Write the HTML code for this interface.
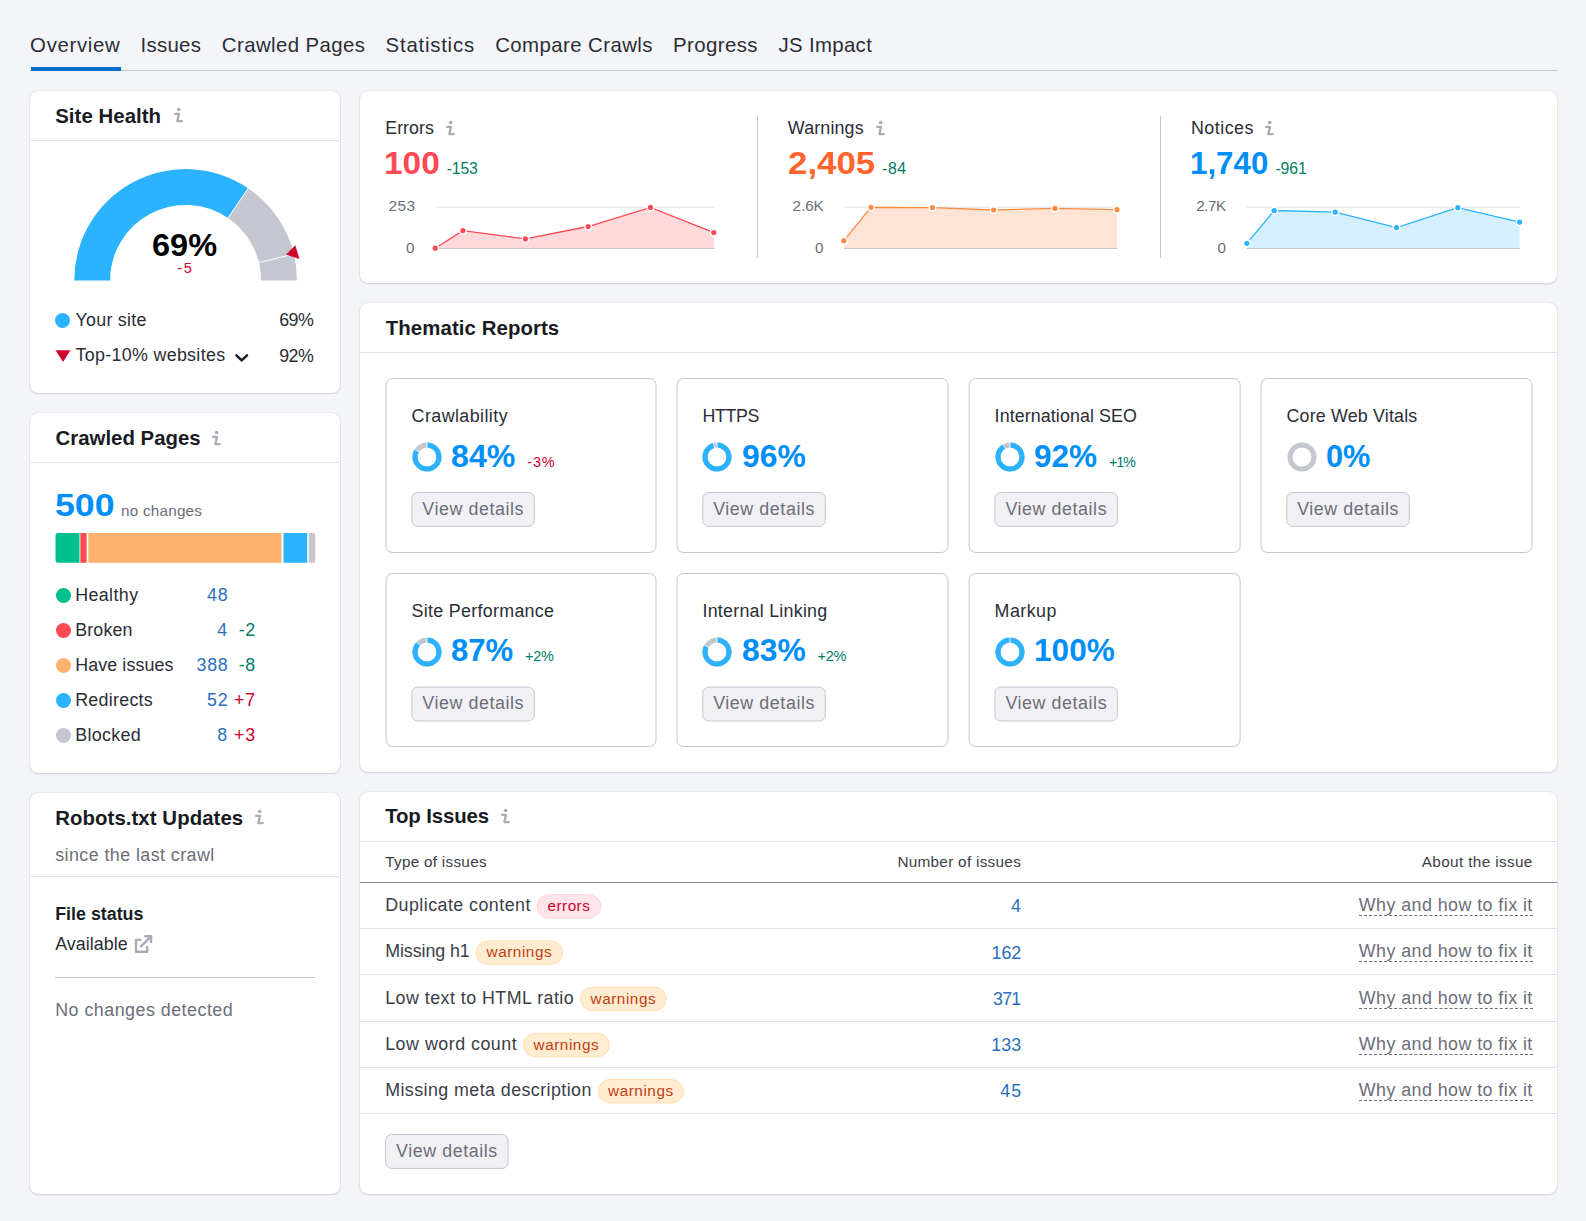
<!DOCTYPE html>
<html lang="en">
<head>
<meta charset="utf-8">
<title>Site Audit Overview</title>
<style>
*{box-sizing:border-box;margin:0;padding:0}
html,body{width:1586px;height:1221px;overflow:hidden}
body{background:#f4f5f9;font-family:"Liberation Sans",sans-serif;color:#191b23;position:relative}
.abs,.t,.card,.dot{position:absolute}
.t{white-space:pre}
.card{background:#fff;border-radius:8px;box-shadow:0 0 1.5px rgba(25,27,35,.22),0 1px 2px rgba(25,27,35,.12)}
.dot{width:15px;height:15px;border-radius:50%}
</style>
</head>
<body>
<div class="t" style="left:30.1px;top:35px;font-size:20.4px;line-height:20.4px;color:#2b2d36;letter-spacing:0.674px;">Overview</div>
<div class="t" style="left:140.4px;top:35px;font-size:20.4px;line-height:20.4px;color:#2b2d36;letter-spacing:0.333px;">Issues</div>
<div class="t" style="left:221.8px;top:35px;font-size:20.4px;line-height:20.4px;color:#2b2d36;letter-spacing:0.410px;">Crawled Pages</div>
<div class="t" style="left:385.6px;top:35px;font-size:20.4px;line-height:20.4px;color:#2b2d36;letter-spacing:0.767px;">Statistics</div>
<div class="t" style="left:495.2px;top:35px;font-size:20.4px;line-height:20.4px;color:#2b2d36;letter-spacing:0.420px;">Compare Crawls</div>
<div class="t" style="left:673.0px;top:35px;font-size:20.4px;line-height:20.4px;color:#2b2d36;letter-spacing:0.415px;">Progress</div>
<div class="t" style="left:778.5px;top:35px;font-size:20.4px;line-height:20.4px;color:#2b2d36;letter-spacing:0.330px;">JS Impact</div>
<div class="abs" style="left:30px;top:70px;width:1528px;height:1px;background:#c4c7cf"></div>
<div class="abs" style="left:30.5px;top:67px;width:90.2px;height:4px;background:#006dca"></div>
<div class="card" style="left:30.3px;top:91px;width:310.2px;height:302px"></div>
<div class="t" style="left:55.2px;top:106px;font-size:20.4px;line-height:20.4px;color:#191b23;letter-spacing:0.051px;font-weight:bold;">Site Health</div>
<svg class="abs" style="left:172.5px;top:106.8px" width="12" height="18" viewBox="0 0 12 18"><circle cx="5.7" cy="2.5" r="1.8" fill="#a9abb6"/><path d="M2.2 6.9 H5.9 L4.4 14.1 H8.8" fill="none" stroke="#a9abb6" stroke-width="2.3" stroke-linecap="round" stroke-linejoin="round"/></svg>
<div class="abs" style="left:30px;top:140px;width:310px;height:1px;background:#e0e1e9"></div>
<svg class="abs" style="left:0;top:0" width="400" height="400" viewBox="0 0 400 400"><path d="M74.25 280.40 A111.35 111.35 0 0 1 248.19 188.30 L228.01 218.00 A75.45 75.45 0 0 0 110.15 280.40 Z" fill="#2bb3ff"/><path d="M248.19 188.30 A111.35 111.35 0 0 1 296.95 280.40 L261.05 280.40 A75.45 75.45 0 0 0 228.01 218.00 Z" fill="#c4c7cf"/><line x1="227.45" y1="218.82" x2="248.75" y2="187.48" stroke="#fff" stroke-width="1"/><line x1="257.93" y1="262.77" x2="294.75" y2="253.79" stroke="#fff" stroke-width="1"/><path d="M286.0 254.4 L295.3 245.3 L299.4 258.9 Z" fill="#d1002f"/></svg>
<div class="t" style="left:152.2px;top:230px;font-size:31.0px;line-height:31.0px;color:#000;transform:scaleX(1.0492);transform-origin:0 0;font-weight:bold;">69%</div>
<div class="t" style="left:177.2px;top:261px;font-size:14.59px;line-height:14.59px;color:#d1002f;letter-spacing:1.731px;">-5</div>
<div class="dot" style="left:55.1px;top:312.8px;width:15.4px;height:15.4px;background:#2bb3ff"></div>
<div class="t" style="left:75.5px;top:312px;font-size:17.85px;line-height:17.85px;color:#2b2d36;letter-spacing:0.265px;">Your site</div>
<div class="t" style="left:279.2px;top:312px;font-size:17.85px;line-height:17.85px;color:#2b2d36;letter-spacing:-0.509px;">69%</div>
<svg class="abs" style="left:55px;top:350px" width="16" height="13" viewBox="0 0 16 13"><path d="M0.5 0.3 H15.5 L8 12 Z" fill="#d1002f"/></svg>
<div class="t" style="left:75.5px;top:347px;font-size:17.85px;line-height:17.85px;color:#2b2d36;letter-spacing:0.319px;">Top-10% websites</div>
<svg class="abs" style="left:234px;top:351.7px" width="16" height="12" viewBox="0 0 16 12"><path d="M2.4 3.4 L7.7 8.4 L13 3.4" fill="none" stroke="#191b23" stroke-width="2.5" stroke-linecap="round" stroke-linejoin="round"/></svg>
<div class="t" style="left:279.2px;top:348px;font-size:17.85px;line-height:17.85px;color:#2b2d36;letter-spacing:-0.509px;">92%</div>
<div class="card" style="left:30.3px;top:413px;width:310.2px;height:360px"></div>
<div class="t" style="left:55.5px;top:428px;font-size:20.4px;line-height:20.4px;color:#191b23;letter-spacing:0.010px;font-weight:bold;">Crawled Pages</div>
<svg class="abs" style="left:210.7px;top:430.0px" width="12" height="18" viewBox="0 0 12 18"><circle cx="5.7" cy="2.5" r="1.8" fill="#a9abb6"/><path d="M2.2 6.9 H5.9 L4.4 14.1 H8.8" fill="none" stroke="#a9abb6" stroke-width="2.3" stroke-linecap="round" stroke-linejoin="round"/></svg>
<div class="abs" style="left:30px;top:462px;width:310px;height:1px;background:#e0e1e9"></div>
<div class="t" style="left:55.1px;top:490px;font-size:31.0px;line-height:31.0px;color:#008ff8;transform:scaleX(1.1520);transform-origin:0 0;font-weight:bold;">500</div>
<div class="t" style="left:121.0px;top:503px;font-size:15.3px;line-height:15.3px;color:#6c6e79;letter-spacing:0.210px;">no changes</div>
<svg class="abs" style="left:50px;top:530px" width="270" height="36" viewBox="50 530 270 36"><defs><clipPath id="barclip"><rect x="55.3" y="533.1" width="260.3" height="29.6" rx="3.2"/></clipPath></defs><g clip-path="url(#barclip)"><rect x="55.3" y="533" width="24.20" height="30" fill="#00bf8f"/><rect x="80.35" y="533" width="6.25" height="30" fill="#ff4953"/><rect x="88.3" y="533" width="193.10" height="30" fill="#ffb26e"/><rect x="283.5" y="533" width="23.70" height="30" fill="#2bb3ff"/><rect x="308.7" y="533" width="6.90" height="30" fill="#c4c7cf"/></g></svg>
<div class="dot" style="left:55.5px;top:587.9px;width:15.4px;height:15.4px;background:#00bf8f"></div>
<div class="t" style="left:75.2px;top:587px;font-size:17.85px;line-height:17.85px;color:#2b2d36;letter-spacing:0.397px;">Healthy</div>
<div class="t" style="left:206.9px;top:587px;font-size:17.85px;line-height:17.85px;color:#2a6fc0;letter-spacing:0.894px;">48</div>
<div class="dot" style="left:55.5px;top:622.9px;width:15.4px;height:15.4px;background:#ff4953"></div>
<div class="t" style="left:75.2px;top:622px;font-size:17.85px;line-height:17.85px;color:#2b2d36;letter-spacing:0.151px;">Broken</div>
<div class="t" style="left:217.3px;top:622px;font-size:17.85px;line-height:17.85px;color:#2a6fc0;">4</div>
<div class="t" style="left:238.7px;top:622px;font-size:17.85px;line-height:17.85px;color:#007c65;letter-spacing:0.714px;">-2</div>
<div class="dot" style="left:55.5px;top:657.8px;width:15.4px;height:15.4px;background:#ffb26e"></div>
<div class="t" style="left:75.2px;top:657px;font-size:17.85px;line-height:17.85px;color:#2b2d36;letter-spacing:0.110px;">Have issues</div>
<div class="t" style="left:196.6px;top:657px;font-size:17.85px;line-height:17.85px;color:#2a6fc0;letter-spacing:0.670px;">388</div>
<div class="t" style="left:238.7px;top:657px;font-size:17.85px;line-height:17.85px;color:#007c65;letter-spacing:0.714px;">-8</div>
<div class="dot" style="left:55.5px;top:692.8px;width:15.4px;height:15.4px;background:#2bb3ff"></div>
<div class="t" style="left:75.2px;top:692px;font-size:17.85px;line-height:17.85px;color:#2b2d36;letter-spacing:0.278px;">Redirects</div>
<div class="t" style="left:206.9px;top:692px;font-size:17.85px;line-height:17.85px;color:#2a6fc0;letter-spacing:0.894px;">52</div>
<div class="t" style="left:234.0px;top:692px;font-size:17.85px;line-height:17.85px;color:#d1002f;letter-spacing:0.916px;">+7</div>
<div class="dot" style="left:55.5px;top:727.7px;width:15.4px;height:15.4px;background:#c4c7cf"></div>
<div class="t" style="left:75.2px;top:727px;font-size:17.85px;line-height:17.85px;color:#2b2d36;letter-spacing:0.336px;">Blocked</div>
<div class="t" style="left:217.3px;top:727px;font-size:17.85px;line-height:17.85px;color:#2a6fc0;">8</div>
<div class="t" style="left:234.0px;top:727px;font-size:17.85px;line-height:17.85px;color:#d1002f;letter-spacing:0.916px;">+3</div>
<div class="card" style="left:30.3px;top:793px;width:310.2px;height:401px"></div>
<div class="t" style="left:55.2px;top:808px;font-size:20.4px;line-height:20.4px;color:#191b23;letter-spacing:0.063px;font-weight:bold;">Robots.txt Updates</div>
<svg class="abs" style="left:254.4px;top:809.2px" width="12" height="18" viewBox="0 0 12 18"><circle cx="5.7" cy="2.5" r="1.8" fill="#a9abb6"/><path d="M2.2 6.9 H5.9 L4.4 14.1 H8.8" fill="none" stroke="#a9abb6" stroke-width="2.3" stroke-linecap="round" stroke-linejoin="round"/></svg>
<div class="t" style="left:55.2px;top:847px;font-size:17.85px;line-height:17.85px;color:#6c6e79;letter-spacing:0.434px;">since the last crawl</div>
<div class="abs" style="left:30px;top:876px;width:310px;height:1px;background:#e0e1e9"></div>
<div class="t" style="left:55.2px;top:906px;font-size:17.85px;line-height:17.85px;color:#191b23;font-weight:bold;">File status</div>
<div class="t" style="left:55.2px;top:936px;font-size:17.85px;line-height:17.85px;color:#2b2d36;letter-spacing:0.063px;">Available</div>
<svg class="abs" style="left:134px;top:934px" width="20" height="20" viewBox="0 0 20 20"><g fill="none" stroke="#a9abb6" stroke-width="2.4" stroke-linecap="round" stroke-linejoin="round"><path d="M6.3 5.9 H2 V17.7 H13.2 V13"/><path d="M11.3 2.3 H17.1 V8.1"/><path d="M16.6 2.8 L7 12.4"/></g></svg>
<div class="abs" style="left:55.3px;top:977px;width:260.2px;height:1px;background:#c4c7cf"></div>
<div class="t" style="left:55.2px;top:1002px;font-size:17.85px;line-height:17.85px;color:#6c6e79;letter-spacing:0.491px;">No changes detected</div>
<div class="card" style="left:360.2px;top:91px;width:1197.2px;height:192px"></div>
<div class="abs" style="left:757px;top:116px;width:1px;height:142px;background:#c4c7cf"></div>
<div class="abs" style="left:1160px;top:116px;width:1px;height:142px;background:#c4c7cf"></div>
<div class="t" style="left:385.2px;top:120px;font-size:17.85px;line-height:17.85px;color:#2b2d36;letter-spacing:0.044px;">Errors</div>
<svg class="abs" style="left:444.7px;top:119.7px" width="12" height="18" viewBox="0 0 12 18"><circle cx="5.7" cy="2.5" r="1.8" fill="#a9abb6"/><path d="M2.2 6.9 H5.9 L4.4 14.1 H8.8" fill="none" stroke="#a9abb6" stroke-width="2.3" stroke-linecap="round" stroke-linejoin="round"/></svg>
<div class="t" style="left:384.2px;top:148px;font-size:31.0px;line-height:31.0px;color:#ff4953;transform:scaleX(1.0786);transform-origin:0 0;font-weight:bold;">100</div>
<div class="t" style="left:446.8px;top:161px;font-size:15.81px;line-height:15.81px;color:#007c65;letter-spacing:-0.208px;">-153</div>
<div class="t" style="left:388.5px;top:198px;font-size:15.3px;line-height:15.3px;color:#6c6e79;letter-spacing:0.484px;">253</div>
<div class="t" style="left:406.1px;top:240px;font-size:15.3px;line-height:15.3px;color:#6c6e79;">0</div>
<svg class="abs" style="left:0;top:0" width="1586" height="300" viewBox="0 0 1586 300"><line x1="435.7" y1="207.2" x2="714.3" y2="207.2" stroke="#e0e1e9" stroke-width="1"/><polygon points="435.2,248.5 435.2,248.2 462.9,230.6 525.4,238.9 588.2,226.5 650.5,207.4 713.8,232.6 713.8,248.5" fill="#ffd9dc"/><line x1="435.7" y1="248.5" x2="714.3" y2="248.5" stroke="#c4c7cf" stroke-width="1"/><polyline points="435.2,248.2 462.9,230.6 525.4,238.9 588.2,226.5 650.5,207.4 713.8,232.6" fill="none" stroke="#ff4953" stroke-width="1.3"/><circle cx="435.2" cy="248.2" r="3.3" fill="#ff4953" stroke="#fff" stroke-width="1.4"/><circle cx="462.9" cy="230.6" r="3.3" fill="#ff4953" stroke="#fff" stroke-width="1.4"/><circle cx="525.4" cy="238.9" r="3.3" fill="#ff4953" stroke="#fff" stroke-width="1.4"/><circle cx="588.2" cy="226.5" r="3.3" fill="#ff4953" stroke="#fff" stroke-width="1.4"/><circle cx="650.5" cy="207.4" r="3.3" fill="#ff4953" stroke="#fff" stroke-width="1.4"/><circle cx="713.8" cy="232.6" r="3.3" fill="#ff4953" stroke="#fff" stroke-width="1.4"/></svg>
<div class="t" style="left:787.8px;top:120px;font-size:17.85px;line-height:17.85px;color:#2b2d36;letter-spacing:0.157px;">Warnings</div>
<svg class="abs" style="left:875.2px;top:119.7px" width="12" height="18" viewBox="0 0 12 18"><circle cx="5.7" cy="2.5" r="1.8" fill="#a9abb6"/><path d="M2.2 6.9 H5.9 L4.4 14.1 H8.8" fill="none" stroke="#a9abb6" stroke-width="2.3" stroke-linecap="round" stroke-linejoin="round"/></svg>
<div class="t" style="left:788.1px;top:148px;font-size:31.0px;line-height:31.0px;color:#ff642d;transform:scaleX(1.1240);transform-origin:0 0;font-weight:bold;">2,405</div>
<div class="t" style="left:882.1px;top:161px;font-size:15.81px;line-height:15.81px;color:#007c65;letter-spacing:0.578px;">-84</div>
<div class="t" style="left:792.5px;top:198px;font-size:15.3px;line-height:15.3px;color:#6c6e79;letter-spacing:-0.056px;">2.6K</div>
<div class="t" style="left:814.9px;top:240px;font-size:15.3px;line-height:15.3px;color:#6c6e79;">0</div>
<svg class="abs" style="left:0;top:0" width="1586" height="300" viewBox="0 0 1586 300"><line x1="843.9" y1="207.2" x2="1117.5" y2="207.2" stroke="#e0e1e9" stroke-width="1"/><polygon points="843.9,248.5 843.9,240.7 870.9,207.3 932.4,207.7 993.7,210.0 1055.0,208.4 1117.0,209.7 1117.0,248.5" fill="#ffe4d6"/><line x1="843.9" y1="248.5" x2="1117.5" y2="248.5" stroke="#c4c7cf" stroke-width="1"/><polyline points="843.9,240.7 870.9,207.3 932.4,207.7 993.7,210.0 1055.0,208.4 1117.0,209.7" fill="none" stroke="#ff8c43" stroke-width="1.3"/><circle cx="843.9" cy="240.7" r="3.3" fill="#ff8c43" stroke="#fff" stroke-width="1.4"/><circle cx="870.9" cy="207.3" r="3.3" fill="#ff8c43" stroke="#fff" stroke-width="1.4"/><circle cx="932.4" cy="207.7" r="3.3" fill="#ff8c43" stroke="#fff" stroke-width="1.4"/><circle cx="993.7" cy="210.0" r="3.3" fill="#ff8c43" stroke="#fff" stroke-width="1.4"/><circle cx="1055.0" cy="208.4" r="3.3" fill="#ff8c43" stroke="#fff" stroke-width="1.4"/><circle cx="1117.0" cy="209.7" r="3.3" fill="#ff8c43" stroke="#fff" stroke-width="1.4"/></svg>
<div class="t" style="left:1191.0px;top:120px;font-size:17.85px;line-height:17.85px;color:#2b2d36;letter-spacing:0.483px;">Notices</div>
<svg class="abs" style="left:1264.2px;top:119.7px" width="12" height="18" viewBox="0 0 12 18"><circle cx="5.7" cy="2.5" r="1.8" fill="#a9abb6"/><path d="M2.2 6.9 H5.9 L4.4 14.1 H8.8" fill="none" stroke="#a9abb6" stroke-width="2.3" stroke-linecap="round" stroke-linejoin="round"/></svg>
<div class="t" style="left:1190.0px;top:148px;font-size:31.0px;line-height:31.0px;color:#008ff8;transform:scaleX(1.0093);transform-origin:0 0;font-weight:bold;">1,740</div>
<div class="t" style="left:1275.5px;top:161px;font-size:15.81px;line-height:15.81px;color:#007c65;letter-spacing:-0.142px;">-961</div>
<div class="t" style="left:1196.3px;top:198px;font-size:15.3px;line-height:15.3px;color:#6c6e79;letter-spacing:-0.490px;">2.7K</div>
<div class="t" style="left:1217.4px;top:240px;font-size:15.3px;line-height:15.3px;color:#6c6e79;">0</div>
<svg class="abs" style="left:0;top:0" width="1586" height="300" viewBox="0 0 1586 300"><line x1="1246.9" y1="207.2" x2="1520.1" y2="207.2" stroke="#e0e1e9" stroke-width="1"/><polygon points="1246.9,248.5 1246.9,243.3 1274.2,210.5 1335.2,212.2 1396.5,227.6 1457.8,207.7 1519.6,222.1 1519.6,248.5" fill="#d4effd"/><line x1="1246.9" y1="248.5" x2="1520.1" y2="248.5" stroke="#c4c7cf" stroke-width="1"/><polyline points="1246.9,243.3 1274.2,210.5 1335.2,212.2 1396.5,227.6 1457.8,207.7 1519.6,222.1" fill="none" stroke="#2bb3ff" stroke-width="1.3"/><circle cx="1246.9" cy="243.3" r="3.3" fill="#2bb3ff" stroke="#fff" stroke-width="1.4"/><circle cx="1274.2" cy="210.5" r="3.3" fill="#2bb3ff" stroke="#fff" stroke-width="1.4"/><circle cx="1335.2" cy="212.2" r="3.3" fill="#2bb3ff" stroke="#fff" stroke-width="1.4"/><circle cx="1396.5" cy="227.6" r="3.3" fill="#2bb3ff" stroke="#fff" stroke-width="1.4"/><circle cx="1457.8" cy="207.7" r="3.3" fill="#2bb3ff" stroke="#fff" stroke-width="1.4"/><circle cx="1519.6" cy="222.1" r="3.3" fill="#2bb3ff" stroke="#fff" stroke-width="1.4"/></svg>
<div class="card" style="left:360.2px;top:302.6px;width:1197.2px;height:469.4px"></div>
<div class="t" style="left:385.8px;top:318px;font-size:20.4px;line-height:20.4px;color:#191b23;letter-spacing:0.078px;font-weight:bold;">Thematic Reports</div>
<div class="abs" style="left:360px;top:352px;width:1197px;height:1px;background:#e0e1e9"></div>
<svg class="abs" style="left:384px;top:376px" width="276" height="180"><rect x="2.05" y="2.50" width="269.95" height="174.00" rx="6.5" fill="#fff" stroke="#c4c7cf" stroke-width="1"/></svg>
<div class="t" style="left:411.6px;top:408px;font-size:17.85px;line-height:17.85px;color:#2b2d36;letter-spacing:0.433px;">Crawlability</div>
<svg class="abs" style="left:410.5px;top:441.0px" width="32" height="32" viewBox="0 0 32 32"><circle cx="16" cy="16" r="12.0" fill="none" stroke="#c4c7cf" stroke-width="5.1"/><circle cx="16" cy="16" r="12.0" fill="none" stroke="#2bb3ff" stroke-width="5.1" stroke-dasharray="63.33 75.40" transform="rotate(-90 16 16)"/><line x1="16.00" y1="7.00" x2="16.00" y2="1.00" stroke="#fff" stroke-width="0.9"/><line x1="8.40" y1="11.18" x2="3.34" y2="7.96" stroke="#fff" stroke-width="0.9"/></svg>
<div class="t" style="left:451.1px;top:441px;font-size:31.0px;line-height:31.0px;color:#008ff8;transform:scaleX(1.0379);transform-origin:0 0;font-weight:bold;">84%</div>
<div class="t" style="left:527.2px;top:455px;font-size:14.48px;line-height:14.48px;color:#d1002f;letter-spacing:0.883px;">-3%</div>
<svg class="abs" style="left:409px;top:490px" width="129" height="40"><rect x="2.85" y="2.50" width="122.50" height="33.90" rx="6" fill="#f1f1f5" stroke="#c4c7cf" stroke-width="1"/></svg>
<div class="t" style="left:422.3px;top:501px;font-size:17.85px;line-height:17.85px;color:#6c6e79;letter-spacing:0.572px;">View details</div>
<svg class="abs" style="left:675px;top:376px" width="277" height="180"><rect x="2.00" y="2.50" width="271.00" height="174.00" rx="6.5" fill="#fff" stroke="#c4c7cf" stroke-width="1"/></svg>
<div class="t" style="left:702.5px;top:408px;font-size:17.85px;line-height:17.85px;color:#2b2d36;letter-spacing:-0.375px;">HTTPS</div>
<svg class="abs" style="left:701.4px;top:441.0px" width="32" height="32" viewBox="0 0 32 32"><circle cx="16" cy="16" r="12.0" fill="none" stroke="#c4c7cf" stroke-width="5.1"/><circle cx="16" cy="16" r="12.0" fill="none" stroke="#2bb3ff" stroke-width="5.1" stroke-dasharray="72.38 75.40" transform="rotate(-90 16 16)"/><line x1="16.00" y1="7.00" x2="16.00" y2="1.00" stroke="#fff" stroke-width="0.9"/><line x1="13.76" y1="7.28" x2="12.27" y2="1.47" stroke="#fff" stroke-width="0.9"/></svg>
<div class="t" style="left:742.0px;top:441px;font-size:31.0px;line-height:31.0px;color:#008ff8;transform:scaleX(1.0266);transform-origin:0 0;font-weight:bold;">96%</div>
<svg class="abs" style="left:700px;top:490px" width="129" height="40"><rect x="2.80" y="2.50" width="122.50" height="33.90" rx="6" fill="#f1f1f5" stroke="#c4c7cf" stroke-width="1"/></svg>
<div class="t" style="left:713.2px;top:501px;font-size:17.85px;line-height:17.85px;color:#6c6e79;letter-spacing:0.572px;">View details</div>
<svg class="abs" style="left:967px;top:376px" width="277" height="180"><rect x="2.10" y="2.50" width="271.00" height="174.00" rx="6.5" fill="#fff" stroke="#c4c7cf" stroke-width="1"/></svg>
<div class="t" style="left:994.6px;top:408px;font-size:17.85px;line-height:17.85px;color:#2b2d36;letter-spacing:0.096px;">International SEO</div>
<svg class="abs" style="left:993.5px;top:441.0px" width="32" height="32" viewBox="0 0 32 32"><circle cx="16" cy="16" r="12.0" fill="none" stroke="#c4c7cf" stroke-width="5.1"/><circle cx="16" cy="16" r="12.0" fill="none" stroke="#2bb3ff" stroke-width="5.1" stroke-dasharray="69.37 75.40" transform="rotate(-90 16 16)"/><line x1="16.00" y1="7.00" x2="16.00" y2="1.00" stroke="#fff" stroke-width="0.9"/><line x1="11.66" y1="8.11" x2="8.77" y2="2.86" stroke="#fff" stroke-width="0.9"/></svg>
<div class="t" style="left:1034.2px;top:441px;font-size:31.0px;line-height:31.0px;color:#008ff8;transform:scaleX(1.0170);transform-origin:0 0;font-weight:bold;">92%</div>
<div class="t" style="left:1109.0px;top:455px;font-size:14.48px;line-height:14.48px;color:#007c65;letter-spacing:-1.238px;">+1%</div>
<svg class="abs" style="left:992px;top:490px" width="129" height="40"><rect x="2.90" y="2.50" width="122.50" height="33.90" rx="6" fill="#f1f1f5" stroke="#c4c7cf" stroke-width="1"/></svg>
<div class="t" style="left:1005.4px;top:501px;font-size:17.85px;line-height:17.85px;color:#6c6e79;letter-spacing:0.572px;">View details</div>
<svg class="abs" style="left:1259px;top:376px" width="277" height="180"><rect x="2.00" y="2.50" width="271.00" height="174.00" rx="6.5" fill="#fff" stroke="#c4c7cf" stroke-width="1"/></svg>
<div class="t" style="left:1286.5px;top:408px;font-size:17.85px;line-height:17.85px;color:#2b2d36;letter-spacing:0.173px;">Core Web Vitals</div>
<svg class="abs" style="left:1285.5px;top:441.0px" width="32" height="32" viewBox="0 0 32 32"><circle cx="16" cy="16" r="12.0" fill="none" stroke="#c4c7cf" stroke-width="5.1"/></svg>
<div class="t" style="left:1326.0px;top:441px;font-size:31.0px;line-height:31.0px;color:#008ff8;transform:scaleX(0.9908);transform-origin:0 0;font-weight:bold;">0%</div>
<svg class="abs" style="left:1284px;top:490px" width="129" height="40"><rect x="2.80" y="2.50" width="122.50" height="33.90" rx="6" fill="#f1f1f5" stroke="#c4c7cf" stroke-width="1"/></svg>
<div class="t" style="left:1297.2px;top:501px;font-size:17.85px;line-height:17.85px;color:#6c6e79;letter-spacing:0.572px;">View details</div>
<svg class="abs" style="left:384px;top:571px" width="276" height="179"><rect x="2.05" y="2.50" width="269.95" height="173.00" rx="6.5" fill="#fff" stroke="#c4c7cf" stroke-width="1"/></svg>
<div class="t" style="left:411.6px;top:603px;font-size:17.85px;line-height:17.85px;color:#2b2d36;letter-spacing:0.303px;">Site Performance</div>
<svg class="abs" style="left:410.5px;top:635.6px" width="32" height="32" viewBox="0 0 32 32"><circle cx="16" cy="16" r="12.0" fill="none" stroke="#c4c7cf" stroke-width="5.1"/><circle cx="16" cy="16" r="12.0" fill="none" stroke="#2bb3ff" stroke-width="5.1" stroke-dasharray="65.60 75.40" transform="rotate(-90 16 16)"/><line x1="16.00" y1="7.00" x2="16.00" y2="1.00" stroke="#fff" stroke-width="0.9"/><line x1="9.44" y1="9.84" x2="5.07" y2="5.73" stroke="#fff" stroke-width="0.9"/></svg>
<div class="t" style="left:451.1px;top:635px;font-size:31.0px;line-height:31.0px;color:#008ff8;transform:scaleX(1.0041);transform-origin:0 0;font-weight:bold;">87%</div>
<div class="t" style="left:525.1px;top:649px;font-size:14.48px;line-height:14.48px;color:#007c65;letter-spacing:-0.287px;">+2%</div>
<svg class="abs" style="left:409px;top:685px" width="129" height="40"><rect x="2.85" y="2.10" width="122.50" height="33.90" rx="6" fill="#f1f1f5" stroke="#c4c7cf" stroke-width="1"/></svg>
<div class="t" style="left:422.3px;top:695px;font-size:17.85px;line-height:17.85px;color:#6c6e79;letter-spacing:0.572px;">View details</div>
<svg class="abs" style="left:675px;top:571px" width="277" height="179"><rect x="2.00" y="2.50" width="271.00" height="173.00" rx="6.5" fill="#fff" stroke="#c4c7cf" stroke-width="1"/></svg>
<div class="t" style="left:702.5px;top:603px;font-size:17.85px;line-height:17.85px;color:#2b2d36;letter-spacing:0.245px;">Internal Linking</div>
<svg class="abs" style="left:701.4px;top:635.6px" width="32" height="32" viewBox="0 0 32 32"><circle cx="16" cy="16" r="12.0" fill="none" stroke="#c4c7cf" stroke-width="5.1"/><circle cx="16" cy="16" r="12.0" fill="none" stroke="#2bb3ff" stroke-width="5.1" stroke-dasharray="62.58 75.40" transform="rotate(-90 16 16)"/><line x1="16.00" y1="7.00" x2="16.00" y2="1.00" stroke="#fff" stroke-width="0.9"/><line x1="8.11" y1="11.66" x2="2.86" y2="8.77" stroke="#fff" stroke-width="0.9"/></svg>
<div class="t" style="left:742.0px;top:635px;font-size:31.0px;line-height:31.0px;color:#008ff8;transform:scaleX(1.0266);transform-origin:0 0;font-weight:bold;">83%</div>
<div class="t" style="left:817.5px;top:649px;font-size:14.48px;line-height:14.48px;color:#007c65;letter-spacing:-0.287px;">+2%</div>
<svg class="abs" style="left:700px;top:685px" width="129" height="40"><rect x="2.80" y="2.10" width="122.50" height="33.90" rx="6" fill="#f1f1f5" stroke="#c4c7cf" stroke-width="1"/></svg>
<div class="t" style="left:713.2px;top:695px;font-size:17.85px;line-height:17.85px;color:#6c6e79;letter-spacing:0.572px;">View details</div>
<svg class="abs" style="left:967px;top:571px" width="277" height="179"><rect x="2.10" y="2.50" width="271.00" height="173.00" rx="6.5" fill="#fff" stroke="#c4c7cf" stroke-width="1"/></svg>
<div class="t" style="left:994.6px;top:603px;font-size:17.85px;line-height:17.85px;color:#2b2d36;letter-spacing:0.460px;">Markup</div>
<svg class="abs" style="left:993.5px;top:635.6px" width="32" height="32" viewBox="0 0 32 32"><circle cx="16" cy="16" r="12.0" fill="none" stroke="#c4c7cf" stroke-width="5.1"/><circle cx="16" cy="16" r="12.0" fill="none" stroke="#2bb3ff" stroke-width="5.1" stroke-dasharray="75.40 75.40" transform="rotate(-90 16 16)"/><line x1="16.00" y1="7.00" x2="16.00" y2="1.00" stroke="#fff" stroke-width="0.9"/></svg>
<div class="t" style="left:1034.2px;top:635px;font-size:31.0px;line-height:31.0px;color:#008ff8;transform:scaleX(1.0190);transform-origin:0 0;font-weight:bold;">100%</div>
<svg class="abs" style="left:992px;top:685px" width="129" height="40"><rect x="2.90" y="2.10" width="122.50" height="33.90" rx="6" fill="#f1f1f5" stroke="#c4c7cf" stroke-width="1"/></svg>
<div class="t" style="left:1005.4px;top:695px;font-size:17.85px;line-height:17.85px;color:#6c6e79;letter-spacing:0.572px;">View details</div>
<div class="card" style="left:360.2px;top:792px;width:1197.2px;height:402px"></div>
<div class="t" style="left:385.2px;top:806px;font-size:20.4px;line-height:20.4px;color:#191b23;letter-spacing:-0.122px;font-weight:bold;">Top Issues</div>
<svg class="abs" style="left:500.1px;top:807.9px" width="12" height="18" viewBox="0 0 12 18"><circle cx="5.7" cy="2.5" r="1.8" fill="#a9abb6"/><path d="M2.2 6.9 H5.9 L4.4 14.1 H8.8" fill="none" stroke="#a9abb6" stroke-width="2.3" stroke-linecap="round" stroke-linejoin="round"/></svg>
<div class="abs" style="left:360px;top:841px;width:1197px;height:1px;background:#e0e1e9"></div>
<div class="t" style="left:385.2px;top:854px;font-size:15.3px;line-height:15.3px;color:#3b3d47;letter-spacing:0.278px;">Type of issues</div>
<div class="t" style="left:897.4px;top:854px;font-size:15.3px;line-height:15.3px;color:#3b3d47;letter-spacing:0.291px;">Number of issues</div>
<div class="t" style="left:1421.8px;top:854px;font-size:15.3px;line-height:15.3px;color:#3b3d47;letter-spacing:0.360px;">About the issue</div>
<div class="abs" style="left:360px;top:882px;width:1197px;height:1px;background:#8a8e9b"></div>
<div class="t" style="left:385.2px;top:897px;font-size:17.85px;line-height:17.85px;color:#3b3d47;letter-spacing:0.457px;">Duplicate content</div>
<svg class="abs" style="left:535px;top:892px" width="70" height="30"><rect x="2.00" y="2.70" width="63.90" height="23.50" rx="11.8" fill="#ffe5ea" stroke="#ffd3da" stroke-width="1"/></svg>
<div class="t" style="left:547.6px;top:898px;font-size:15.3px;line-height:15.3px;color:#d1002f;letter-spacing:0.449px;">errors</div>
<div class="t" style="left:1010.9px;top:898px;font-size:17.85px;line-height:17.85px;color:#2a6fc0;">4</div>
<div class="t" style="left:1358.8px;top:897px;font-size:17.85px;line-height:17.85px;color:#6c6e79;letter-spacing:0.443px;">Why and how to fix it</div>
<div class="abs" style="left:1359px;top:914.6px;width:173.5px;height:0;border-top:1px dashed #6c6e79"></div>
<div class="abs" style="left:360px;top:928px;width:1197px;height:1px;background:#e0e1e9"></div>
<div class="t" style="left:385.2px;top:943px;font-size:17.85px;line-height:17.85px;color:#3b3d47;letter-spacing:-0.077px;">Missing h1</div>
<svg class="abs" style="left:474px;top:938px" width="93" height="30"><rect x="2.00" y="2.90" width="86.80" height="23.50" rx="11.8" fill="#ffecd1" stroke="#ffdfb3" stroke-width="1"/></svg>
<div class="t" style="left:486.6px;top:944px;font-size:15.3px;line-height:15.3px;color:#c13d12;letter-spacing:0.540px;">warnings</div>
<div class="t" style="left:991.5px;top:945px;font-size:17.85px;line-height:17.85px;color:#2a6fc0;">162</div>
<div class="t" style="left:1358.8px;top:943px;font-size:17.85px;line-height:17.85px;color:#6c6e79;letter-spacing:0.443px;">Why and how to fix it</div>
<div class="abs" style="left:1359px;top:960.6px;width:173.5px;height:0;border-top:1px dashed #6c6e79"></div>
<div class="abs" style="left:360px;top:974px;width:1197px;height:1px;background:#e0e1e9"></div>
<div class="t" style="left:385.2px;top:990px;font-size:17.85px;line-height:17.85px;color:#3b3d47;letter-spacing:0.460px;">Low text to HTML ratio</div>
<svg class="abs" style="left:578px;top:985px" width="92" height="30"><rect x="2.50" y="2.10" width="85.80" height="23.50" rx="11.8" fill="#ffecd1" stroke="#ffdfb3" stroke-width="1"/></svg>
<div class="t" style="left:590.6px;top:991px;font-size:15.3px;line-height:15.3px;color:#c13d12;letter-spacing:0.540px;">warnings</div>
<div class="t" style="left:993.0px;top:991px;font-size:17.85px;line-height:17.85px;color:#2a6fc0;letter-spacing:-0.741px;">371</div>
<div class="t" style="left:1358.8px;top:990px;font-size:17.85px;line-height:17.85px;color:#6c6e79;letter-spacing:0.443px;">Why and how to fix it</div>
<div class="abs" style="left:1359px;top:1007.6px;width:173.5px;height:0;border-top:1px dashed #6c6e79"></div>
<div class="abs" style="left:360px;top:1021px;width:1197px;height:1px;background:#e0e1e9"></div>
<div class="t" style="left:385.2px;top:1036px;font-size:17.85px;line-height:17.85px;color:#3b3d47;letter-spacing:0.501px;">Low word count</div>
<svg class="abs" style="left:521px;top:1031px" width="92" height="30"><rect x="2.50" y="2.30" width="85.80" height="23.50" rx="11.8" fill="#ffecd1" stroke="#ffdfb3" stroke-width="1"/></svg>
<div class="t" style="left:533.6px;top:1037px;font-size:15.3px;line-height:15.3px;color:#c13d12;letter-spacing:0.540px;">warnings</div>
<div class="t" style="left:991.2px;top:1037px;font-size:17.85px;line-height:17.85px;color:#2a6fc0;letter-spacing:0.159px;">133</div>
<div class="t" style="left:1358.8px;top:1036px;font-size:17.85px;line-height:17.85px;color:#6c6e79;letter-spacing:0.443px;">Why and how to fix it</div>
<div class="abs" style="left:1359px;top:1053.6px;width:173.5px;height:0;border-top:1px dashed #6c6e79"></div>
<div class="abs" style="left:360px;top:1067px;width:1197px;height:1px;background:#e0e1e9"></div>
<div class="t" style="left:385.2px;top:1082px;font-size:17.85px;line-height:17.85px;color:#3b3d47;letter-spacing:0.427px;">Missing meta description</div>
<svg class="abs" style="left:596px;top:1077px" width="92" height="30"><rect x="2.20" y="2.50" width="85.30" height="23.50" rx="11.8" fill="#ffecd1" stroke="#ffdfb3" stroke-width="1"/></svg>
<div class="t" style="left:608.1px;top:1083px;font-size:15.3px;line-height:15.3px;color:#c13d12;letter-spacing:0.540px;">warnings</div>
<div class="t" style="left:1000.3px;top:1083px;font-size:17.85px;line-height:17.85px;color:#2a6fc0;letter-spacing:1.141px;">45</div>
<div class="t" style="left:1358.8px;top:1082px;font-size:17.85px;line-height:17.85px;color:#6c6e79;letter-spacing:0.443px;">Why and how to fix it</div>
<div class="abs" style="left:1359px;top:1099.6px;width:173.5px;height:0;border-top:1px dashed #6c6e79"></div>
<div class="abs" style="left:360px;top:1113px;width:1197px;height:1px;background:#e0e1e9"></div>
<svg class="abs" style="left:383px;top:1132px" width="129" height="40"><rect x="2.60" y="2.50" width="122.50" height="33.90" rx="6" fill="#f1f1f5" stroke="#c4c7cf" stroke-width="1"/></svg>
<div class="t" style="left:396.1px;top:1143px;font-size:17.85px;line-height:17.85px;color:#6c6e79;letter-spacing:0.572px;">View details</div>
</body>
</html>
